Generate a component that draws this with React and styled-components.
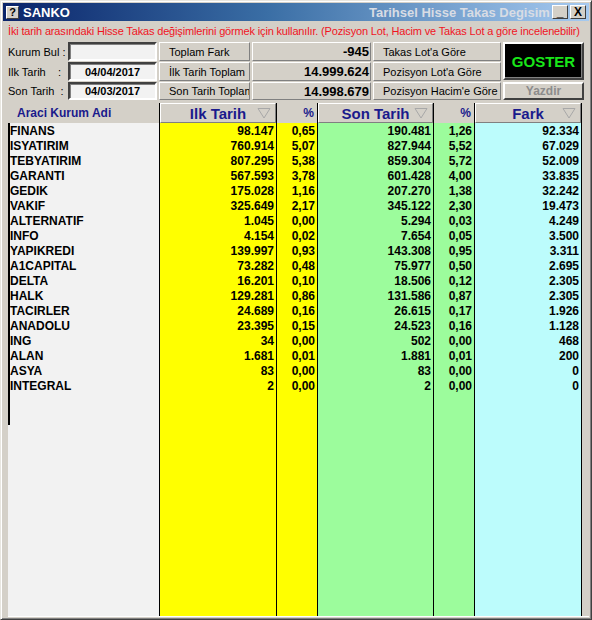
import React from "react";
import styled, { createGlobalStyle } from "styled-components";

const rows = [
  ["FINANS", "98.147", "0,65", "190.481", "1,26", "92.334"],
  ["ISYATIRIM", "760.914", "5,07", "827.944", "5,52", "67.029"],
  ["TEBYATIRIM", "807.295", "5,38", "859.304", "5,72", "52.009"],
  ["GARANTI", "567.593", "3,78", "601.428", "4,00", "33.835"],
  ["GEDIK", "175.028", "1,16", "207.270", "1,38", "32.242"],
  ["VAKIF", "325.649", "2,17", "345.122", "2,30", "19.473"],
  ["ALTERNATIF", "1.045", "0,00", "5.294", "0,03", "4.249"],
  ["INFO", "4.154", "0,02", "7.654", "0,05", "3.500"],
  ["YAPIKREDI", "139.997", "0,93", "143.308", "0,95", "3.311"],
  ["A1CAPITAL", "73.282", "0,48", "75.977", "0,50", "2.695"],
  ["DELTA", "16.201", "0,10", "18.506", "0,12", "2.305"],
  ["HALK", "129.281", "0,86", "131.586", "0,87", "2.305"],
  ["TACIRLER", "24.689", "0,16", "26.615", "0,17", "1.926"],
  ["ANADOLU", "23.395", "0,15", "24.523", "0,16", "1.128"],
  ["ING", "34", "0,00", "502", "0,00", "468"],
  ["ALAN", "1.681", "0,01", "1.881", "0,01", "200"],
  ["ASYA", "83", "0,00", "83", "0,00", "0"],
  ["INTEGRAL", "2", "0,00", "2", "0,00", "0"],
];

const columns = [
  { title: "Ilk Tarih", width: 117, bg: "#ffff00", key: 1 },
  { title: "%", width: 41, bg: "#ffff00", key: 2, small: true },
  { title: "Son Tarih", width: 116, bg: "#9cfc9c", key: 3 },
  { title: "%", width: 41, bg: "#9cfc9c", key: 4, small: true },
  { title: "Fark", width: 108, bg: "#bcfcfc", key: 5, last: true },
];

// Sort arrow in the column header
function SortArrow() {
  return (
    <svg width="14" height="12" viewBox="0 0 14 12">
      <path d="M1 1.5 L13 1.5 L7 11 Z" fill="none" stroke="#a8a8a8" strokeWidth="1" />
    </svg>
  );
}

function App() {
  return (
    <>
      <GlobalStyle />
      <Window>
        <TitleBar>
          <HelpIcon>?</HelpIcon>
          <AppName>SANKO</AppName>
          <Caption>Tarihsel Hisse Takas Degisimi</Caption>
          <CapButton>_</CapButton>
          <CapButton>X</CapButton>
        </TitleBar>
        <Message>
          İki tarih arasındaki Hisse Takas değişimlerini görmek için kullanılır. (Pozisyon Lot, Hacim ve Takas Lot a göre incelenebilir)
        </Message>
        <Form>
          <Label>Kurum Bul :</Label>
          <Input />
          <Panel>Toplam Fark</Panel>
          <Value>-945</Value>
          <Panel>Takas Lot'a Göre</Panel>
          <Goster>GOSTER</Goster>

          <Label>Ilk Tarih&nbsp;&nbsp;&nbsp;&nbsp;:</Label>
          <Input>04/04/2017</Input>
          <Panel>İlk Tarih Toplam</Panel>
          <Value>14.999.624</Value>
          <Panel>Pozisyon Lot'a Göre</Panel>

          <Label>Son Tarih&nbsp;&nbsp;:</Label>
          <Input>04/03/2017</Input>
          <Panel>Son Tarih Toplam</Panel>
          <Value>14.998.679</Value>
          <Panel>Pozisyon Hacim'e Göre</Panel>
          <Yazdir>Yazdir</Yazdir>
        </Form>
        <Grid>
          <NameColumn>
            <NameHeader>Araci Kurum Adi</NameHeader>
            <NameList>
              {rows.map((r) => (
                <NameCell key={r[0]}>{r[0]}</NameCell>
              ))}
            </NameList>
          </NameColumn>
          {columns.map((c) => (
            <Column key={c.key} $width={c.width} $bg={c.bg} $last={c.last}>
              {c.small ? (
                <PctHeader>%</PctHeader>
              ) : (
                <Header>
                  <span>{c.title}</span>
                  <ArrowSlot>
                    <SortArrow />
                  </ArrowSlot>
                </Header>
              )}
              {rows.map((r) => (
                <Cell key={r[0]}>{r[c.key]}</Cell>
              ))}
            </Column>
          ))}
          <Rest />
        </Grid>
      </Window>
    </>
  );
}

const GlobalStyle = createGlobalStyle`
  body {
    margin: 0;
    background: #d4d0c8;
    font-family: "Liberation Sans", Arial, sans-serif;
  }
`;

const Window = styled.div`
  width: 592px;
  height: 620px;
  box-sizing: border-box;
  background: #d4d0c8;
  border: 1px solid;
  border-color: #e8e6e0 #404040 #404040 #e8e6e0;
  box-shadow: inset 1px 1px #ffffff, inset -1px -1px #808080;
  padding: 2px;
  display: flex;
  flex-direction: column;
`;

const TitleBar = styled.div`
  height: 18px;
  flex-shrink: 0;
  display: flex;
  align-items: center;
  background: linear-gradient(90deg, #0a246a 0%, #3a6ea5 45%, #a6caf0 100%);
  padding: 0 3px 0 3px;
  overflow: hidden;
`;

const HelpIcon = styled.div`
  width: 13px;
  height: 13px;
  background: #d4d0c8;
  border: 1px solid #ffffff;
  border-right-color: #404040;
  border-bottom-color: #404040;
  box-sizing: border-box;
  font-size: 11px;
  font-weight: bold;
  line-height: 11px;
  text-align: center;
  color: #000;
`;

const AppName = styled.div`
  color: #ffffff;
  font-weight: bold;
  font-size: 13px;
  margin-left: 4px;
`;

const Caption = styled.div`
  flex: 1;
  overflow: hidden;
  white-space: nowrap;
  color: #d8dce4;
  font-weight: bold;
  font-size: 13px;
  padding-left: 299px;
`;

const CapButton = styled.div`
  width: 16px;
  height: 14px;
  box-sizing: border-box;
  margin-left: 2px;
  background: #d4d0c8;
  border: 1px solid;
  border-color: #ffffff #404040 #404040 #ffffff;
  font-size: 12px;
  font-weight: bold;
  line-height: 12px;
  text-align: center;
  color: #000;
`;

const Message = styled.div`
  color: #f0141e;
  font-size: 11px;
  letter-spacing: -0.16px;
  white-space: nowrap;
  overflow: hidden;
  padding: 4px 0 0 5px;
  height: 18px;
  flex-shrink: 0;
  box-sizing: border-box;
`;

const Form = styled.div`
  display: grid;
  grid-template-columns: 58px 89px 91px 119px 128px 81px;
  grid-template-rows: 19px 19px 18px;
  column-gap: 2px;
  row-gap: 1px;
  padding: 3px 0 0 5px;
`;

const Label = styled.div`
  font-size: 11px;
  display: flex;
  align-items: center;
  white-space: nowrap;
  color: #000;
`;

const Input = styled.div`
  background: #f2f2f2;
  border: 2px solid;
  border-color: #404040 #ffffff #ffffff #404040;
  box-shadow: inset 1px 1px #808080;
  font-size: 11px;
  font-weight: bold;
  display: flex;
  align-items: center;
  justify-content: center;
  box-sizing: border-box;
`;

const Raised = styled.div`
  background: #d4d0c8;
  border: 1px solid;
  border-color: #ffffff #808080 #808080 #ffffff;
  box-sizing: border-box;
  display: flex;
  align-items: center;
  white-space: nowrap;
  overflow: hidden;
`;

const Panel = styled(Raised)`
  font-size: 11px;
  padding-left: 9px;
`;

const Value = styled(Raised)`
  justify-content: flex-end;
  font-size: 13px;
  font-weight: bold;
  padding-right: 1px;
`;

const Goster = styled.div`
  grid-column: 6;
  grid-row: 1 / span 2;
  background: #000000;
  border: 2px solid;
  border-color: #ffffff #404040 #404040 #ffffff;
  box-shadow: inset -1px -1px #808080;
  color: #19e619;
  font-size: 15px;
  font-weight: bold;
  display: flex;
  align-items: center;
  justify-content: center;
  margin-bottom: 1px;
`;

const Yazdir = styled(Raised)`
  grid-column: 6;
  border: 2px solid;
  border-color: #ffffff #404040 #404040 #ffffff;
  justify-content: center;
  color: #8c8c8c;
  font-size: 12px;
  font-weight: bold;
`;

const Grid = styled.div`
  flex: 1;
  display: flex;
  margin: 3px 0 0 5px;
  border-bottom: 1px solid #ffffff;
`;

const NameColumn = styled.div`
  width: 151px;
  display: flex;
  flex-direction: column;
  background: #f2f2f2;
`;

const NameHeader = styled.div`
  height: 20px;
  background: #d4d0c8;
  color: #1a1a8c;
  font-weight: bold;
  font-size: 12px;
  display: flex;
  align-items: center;
  padding-left: 9px;
  flex-shrink: 0;
`;

const NameList = styled.div`
  height: 301px;
  border-left: 2px solid #000;
  padding-top: 1px;
`;

const NameCell = styled.div`
  height: 15px;
  line-height: 15px;
  font-size: 12px;
  font-weight: bold;
  color: #000;
`;

const Column = styled.div`
  width: ${(p) => p.$width}px;
  flex-shrink: 0;
  box-sizing: border-box;
  background: ${(p) => p.$bg};
  border-left: 1px solid #000;
  border-right: ${(p) => (p.$last ? "1px solid #000" : "none")};
  display: flex;
  flex-direction: column;
`;

const Header = styled.div`
  height: 20px;
  flex-shrink: 0;
  box-sizing: border-box;
  background: #d4d0c8;
  border: 1px solid;
  border-color: #ffffff #808080 #808080 #ffffff;
  color: #1a1a8c;
  font-weight: bold;
  font-size: 15px;
  display: flex;
  align-items: center;
  justify-content: center;
  position: relative;
  margin-bottom: 1px;
`;

const ArrowSlot = styled.div`
  position: absolute;
  right: 4px;
  top: 3px;
  display: flex;
`;

const PctHeader = styled.div`
  height: 20px;
  flex-shrink: 0;
  background: #d4d0c8;
  color: #1a1a8c;
  font-weight: bold;
  font-size: 12px;
  display: flex;
  align-items: center;
  justify-content: flex-end;
  padding-right: 3px;
  margin-bottom: 1px;
`;

const Cell = styled.div`
  height: 15px;
  line-height: 15px;
  font-size: 12px;
  font-weight: bold;
  text-align: right;
  padding-right: 2px;
  color: #000;
`;

const Rest = styled.div`
  flex: 1;
`;

export default App;
